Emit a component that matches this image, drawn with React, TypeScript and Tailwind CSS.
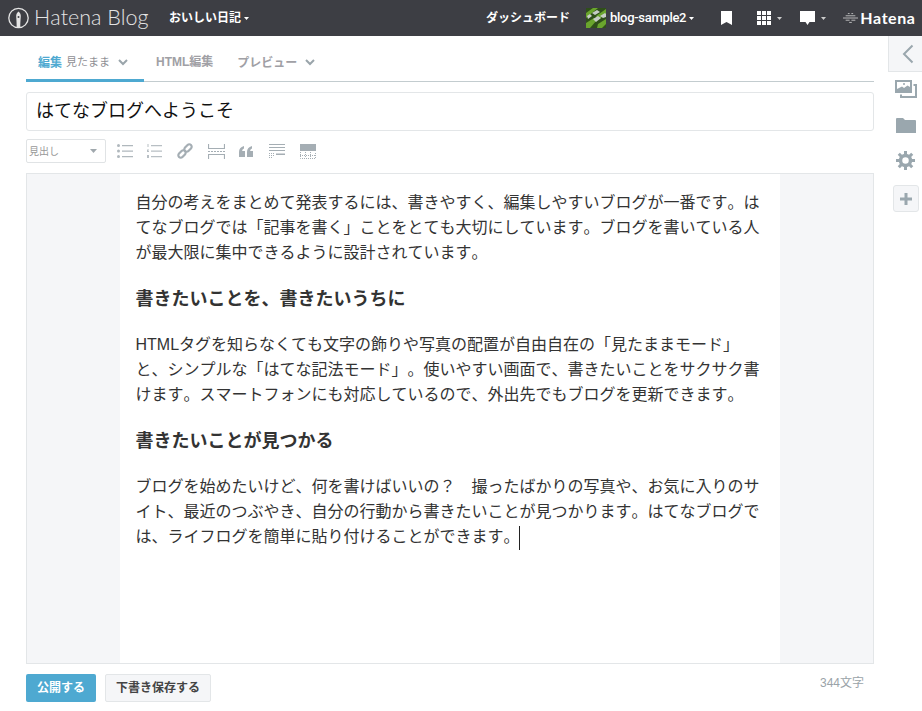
import React from "react";

const jp = "font-['Liberation_Sans','Noto_Sans_CJK_JP',sans-serif]";

const Caret = () => (
  <svg width="5" height="3" viewBox="0 0 5 3" className="ml-[3px] shrink-0">
    <path d="M0 0h5L2.500 3z" fill="currentColor" />
  </svg>
);

const Chevron = () => (
  <svg width="10" height="7" viewBox="0 0 10 7" fill="none" stroke="#9aa5ab" strokeWidth="2">
    <path d="M1 1l4 4 4-4" />
  </svg>
);

const Header = () => (
  <header className="h-9 bg-[#3d3e44] flex items-center text-white shrink-0">
    <svg width="22" height="22" viewBox="0 0 22 22" className="ml-2 shrink-0" fill="none">
      <circle cx="10.500" cy="11" r="9.700" stroke="#e4e4e4" strokeWidth="1.300" />
      <path d="M10.500 4.500c1.500 1.300 2.300 2.700 2.300 4.500 0 2.200-.5 5-.5 11H8.700c0-6-.5-8.800-.5-11 0-1.800.8-3.200 2.300-4.500z" fill="#e4e4e4" />
      <circle cx="10.500" cy="10" r="1" fill="#3d3e44" />
    </svg>
    <span className="ml-[4px] font-['Lato',sans-serif] font-light text-[21.500px] leading-none text-[#e4e4e4] w-[115px] shrink-0 whitespace-nowrap">Hatena Blog</span>
    <span className={`ml-[20px] text-[12px] font-bold flex items-center shrink-0 whitespace-nowrap ${jp}`}>おいしい日記<Caret /></span>
    <span className={`ml-[237px] text-[12px] font-bold whitespace-nowrap shrink-0 ${jp}`}>ダッシュボード</span>
    <svg width="20" height="20" viewBox="0 0 20 20" className="ml-[16px] shrink-0">
      <rect width="20" height="20" fill="#2f4f1a" />
      <path d="M0 5L7 0h5L0 10zM10 8L20 1v5L12 12zM0 15l8-5 3 2-7 8H0zM12 16l8-5v5l-4 4h-5z" fill="#6aa52d" />
      <path d="M6 5l5-3 3 2-5 3zM14 8l5-3 1 1v3l-3 1zM7 11l5-3 3 2-5 4zM1 8l3-2 2 2-4 3z" fill="#c6cdc6" />
    </svg>
    <span className="ml-[4px] text-[13px] whitespace-nowrap shrink-0 flex items-center font-['Roboto',sans-serif] font-medium tracking-[-0.3px]">blog-sample2<Caret /></span>
    <svg width="11" height="14" viewBox="0 0 11 14" className="ml-[27px] shrink-0">
      <path d="M0 0h11v14L5.500 11 0 14z" fill="#fff" />
    </svg>
    <svg width="14" height="14" viewBox="0 0 14 14" className="ml-[25px] shrink-0" fill="#fff">
      <path d="M0 0h4v4H0zM5 0h4v4H5zM10 0h4v4h-4zM0 5h4v4H0zM5 5h4v4H5zM10 5h4v4h-4zM0 10h4v4H0zM5 10h4v4H5zM10 10h4v4h-4z" />
    </svg>
    <span className="text-[#ccc] ml-[3px]"><Caret /></span>
    <svg width="15" height="14" viewBox="0 0 15 14" className="ml-[18px] shrink-0">
      <path d="M0 0h15v11H9.500L7.500 14l-2-3H0z" fill="#fff" />
    </svg>
    <span className="text-[#ccc] ml-[3px]"><Caret /></span>
    <svg width="15" height="10" viewBox="0 0 17 11" className="ml-[17px] shrink-0" stroke="#c8c8c8" strokeWidth="1">
      <path d="M5.500 .5h2M9.500 .5h2M3 3h11M0 5.500h17M3 8h4.500M9.500 8h4.500M7 10.500h3" />
    </svg>
    <span className="ml-[2px] font-['Lato',sans-serif] font-bold text-[16px] tracking-[0.5px] leading-none shrink-0">Hatena</span>
  </header>
);

const Tabs = () => (
  <div className={`h-[38px] flex border-b border-[#c3cccf] text-[12px] font-bold text-[#a0a0a5] ${jp}`}>
    <div className="w-[118px] h-[38px] border-b-[3px] border-[#4ea9d1] flex items-center pl-3 pt-[2px]">
      <span className="text-[#4ea9d1]">編集</span>
      <span className="ml-1 font-normal text-[11px] text-[#8f8f94] whitespace-nowrap">見たまま</span>
      <span className="ml-2"><Chevron /></span>
    </div>
    <div className="ml-3 flex items-center pb-[1px] whitespace-nowrap">HTML編集</div>
    <div className="ml-6 flex items-center whitespace-nowrap">プレビュー<span className="ml-2"><Chevron /></span></div>
  </div>
);

const Toolbar = () => (
  <div className="mt-2 h-6 flex items-center">
    <div className={`w-20 h-6 border border-[#e0e3e5] rounded-[2px] flex items-center justify-between pl-[2px] pr-2 text-[10px] text-[#999] ${jp}`}>
      <span>見出し</span>
      <svg width="7" height="4" viewBox="0 0 7 4" className="text-[#a0a8ad]">
        <path d="M0 0h7L3.500 4z" fill="currentColor" />
      </svg>
    </div>
    <div className="flex items-center text-[#a5aeb4]">
      <svg width="16" height="14" viewBox="0 0 16 14" className="ml-[11px] text-[#b0b8bd]" fill="currentColor">
        <circle cx="1.500" cy="1.500" r="1.500" />
        <circle cx="1.500" cy="7" r="1.500" />
        <circle cx="1.500" cy="12.500" r="1.500" />
        <path d="M5 1h11v1.200H5zM5 6.500h11v1.200H5zM5 12h11v1.200H5z" />
      </svg>
      <svg width="15" height="14" viewBox="0 0 15 14" className="ml-[14px] text-[#b8bfc4]" fill="currentColor">
        <path d="M.5 0h1v3h-1zM0 5.500h2v1H1v.5h1v1H0zM0 11h2v3H0zM4 1h11v1.200H4zM4 6.500h11v1.200H4zM4 12h11v1.200H4z" />
      </svg>
      <svg width="16" height="16" viewBox="0 0 16 16" className="ml-[15px]" fill="none" stroke="currentColor" strokeWidth="2.200">
        <rect x="-4.200" y="-2.400" width="8.400" height="4.800" rx="2.400" transform="translate(5 11) rotate(-45)" />
        <rect x="-4.200" y="-2.400" width="8.400" height="4.800" rx="2.400" transform="translate(11 5) rotate(-45)" />
      </svg>
      <svg width="17" height="15" viewBox="0 0 17 15" className="ml-[15px]" fill="none" stroke="currentColor" strokeWidth="1.200">
        <path d="M.5 0v4.500h16V0M.5 15v-4.500h16V15" />
        <path d="M0 7.500h17" strokeDasharray="2 1" />
      </svg>
      <svg width="14" height="11" viewBox="0 0 14 11" className="ml-[14px]" fill="currentColor">
        <path d="M0 11V6c0-3 1.500-5 5-6v2.500C3.800 3 3.200 4 3.200 5H6v6zM8 11V6c0-3 1.500-5 5-6v2.500C11.800 3 11.200 4 11.200 5H14v6z" />
      </svg>
      <svg width="16" height="15" viewBox="0 0 16 15" className="ml-[16px]" fill="currentColor">
        <path d="M0 0h16v1H0zM0 3h16v1H0zM0 6h16v1H0zM7 9.500h9v1.500H7zM0 9h1v1H0zM2 9h1v1H2zM4 9h1v1H4zM0 11h1v1H0zM2 11h1v1H2zM4 11h1v1H4zM0 13h1v1H0zM2 13h1v1H2z" />
      </svg>
      <svg width="16" height="15" viewBox="0 0 16 15" className="ml-[15px]">
        <path d="M0 0h16v7H0z" fill="currentColor" />
        <path d="M.5 8v6.500h15V8M0 11.500h16M5.500 8v6M10.500 8v6" fill="none" stroke="currentColor" strokeDasharray="1 1" />
      </svg>
    </div>
  </div>
);

const Sidebar = () => (
  <aside className="w-[34px] ml-[14px] shrink-0 flex flex-col items-center text-[#9aa7ae]">
    <div className="w-[34px] h-9 bg-[#f5f6f8] border-l border-b border-[#e3e6e8] flex items-center justify-center pl-[4px]">
      <svg width="12" height="20" viewBox="0 0 12 20" fill="none" stroke="#9aa7ae" strokeWidth="2">
        <path d="M10.500 1.500L2 10l8.500 8.500" />
      </svg>
    </div>
    <svg width="22" height="18" viewBox="0 0 22 18" className="mt-[8px] ml-[2px]">
      <path d="M0 0h17v13H0z" fill="currentColor" />
      <path d="M2 2h13v5l-2.500-1.500L9 8 7 6.500 2 9z" fill="#fff" />
      <circle cx="9" cy="4" r="1" fill="currentColor" />
      <path d="M18.500 5H21v12H6v-2.500" fill="none" stroke="currentColor" strokeWidth="2" />
    </svg>
    <svg width="20" height="15" viewBox="0 0 20 15" className="mt-[20px] ml-[2px]" fill="currentColor">
      <path d="M0 1a1 1 0 0 1 1-1h6l2 2h10a1 1 0 0 1 1 1v12H0z" />
    </svg>
    <svg width="19" height="19" viewBox="0 0 19 19" className="mt-[18px] ml-[1px]" fill="none" stroke="currentColor">
      <circle cx="9.500" cy="9.500" r="5" strokeWidth="3.500" />
      <path d="M9.500 0v4M9.500 15v4M0 9.500h4M15 9.500h4M2.800 2.800l2.800 2.800M13.400 13.400l2.800 2.800M2.800 16.200l2.800-2.800M13.400 5.600l2.800-2.800" strokeWidth="3" />
    </svg>
    <div className="mt-[15px] ml-[2px] w-[26px] h-[27px] bg-[#f5f6f8] border border-[#e3e6e8] rounded-[3px] flex items-center justify-center">
      <svg width="12" height="12" viewBox="0 0 12 12" fill="currentColor">
        <path d="M4.500 0h3v4.500H12v3H7.500V12h-3V7.500H0v-3h4.500z" />
      </svg>
    </div>
  </aside>
);

export default function App() {
  return (
    <div className={`w-[922px] h-[711px] bg-white overflow-hidden flex flex-col [text-spacing-trim:space-all] [font-kerning:none] ${jp}`}>
      <Header />
      <div className="flex flex-1 min-h-0">
        <main className="w-[848px] ml-[26px] shrink-0">
          <div className="mt-2"><Tabs /></div>
          <input
            readOnly
            value="はてなブログへようこそ"
            className="mt-[10px] w-full h-[39px] border border-[#e3e6e8] rounded-[3px] pl-[9px] pr-[9px] pb-[5px] text-[18px] text-[#111] outline-none"
          />
          <Toolbar />
          <div className="mt-[10px] h-[491px] border border-[#e3e6e8] bg-[#f5f6f8] px-[93px]">
            <div className="h-full bg-white pl-[15.500px] pr-4 pt-4 text-[16px] leading-[25px] text-[#333]">
              <p>自分の考えをまとめて発表するには、書きやすく、編集しやすいブログが一番です。はてなブログでは「記事を書く」ことをとても大切にしています。ブログを書いている人が最大限に集中できるように設計されています。</p>
              <h2 className="mt-[21px] text-[18px] font-bold leading-[26px]">書きたいことを、書きたいうちに</h2>
              <p className="mt-[20px]">HTMLタグを知らなくても文字の飾りや写真の配置が自由自在の「見たままモード」と、シンプルな「はてな記法モード」。使いやすい画面で、書きたいことをサクサク書けます。スマートフォンにも対応しているので、外出先でもブログを更新できます。</p>
              <h2 className="mt-[21px] text-[18px] font-bold leading-[26px]">書きたいことが見つかる</h2>
              <p className="mt-[20px]">ブログを始めたいけど、何を書けばいいの？　撮ったばかりの写真や、お気に入りのサイト、最近のつぶやき、自分の行動から書きたいことが見つかります。はてなブログでは、ライフログを簡単に貼り付けることができます。<span className="inline-block w-px h-[24px] bg-[#222] align-middle ml-[-1px]" /></p>
            </div>
          </div>
          <div className="mt-[10px] flex items-start">
            <button className="w-[70px] h-7 bg-[#4ea9d1] rounded-[2px] text-white text-[12px] font-bold">公開する</button>
            <button className="ml-[9px] w-[106px] h-7 bg-[#f5f6f8] border border-[#e3e6e8] rounded-[2px] text-[#444] text-[12px] font-bold">下書き保存する</button>
            <span className="ml-auto mr-[10px] text-[12px] text-[#9aa3a8]">344文字</span>
          </div>
        </main>
        <Sidebar />
      </div>
    </div>
  );
}
